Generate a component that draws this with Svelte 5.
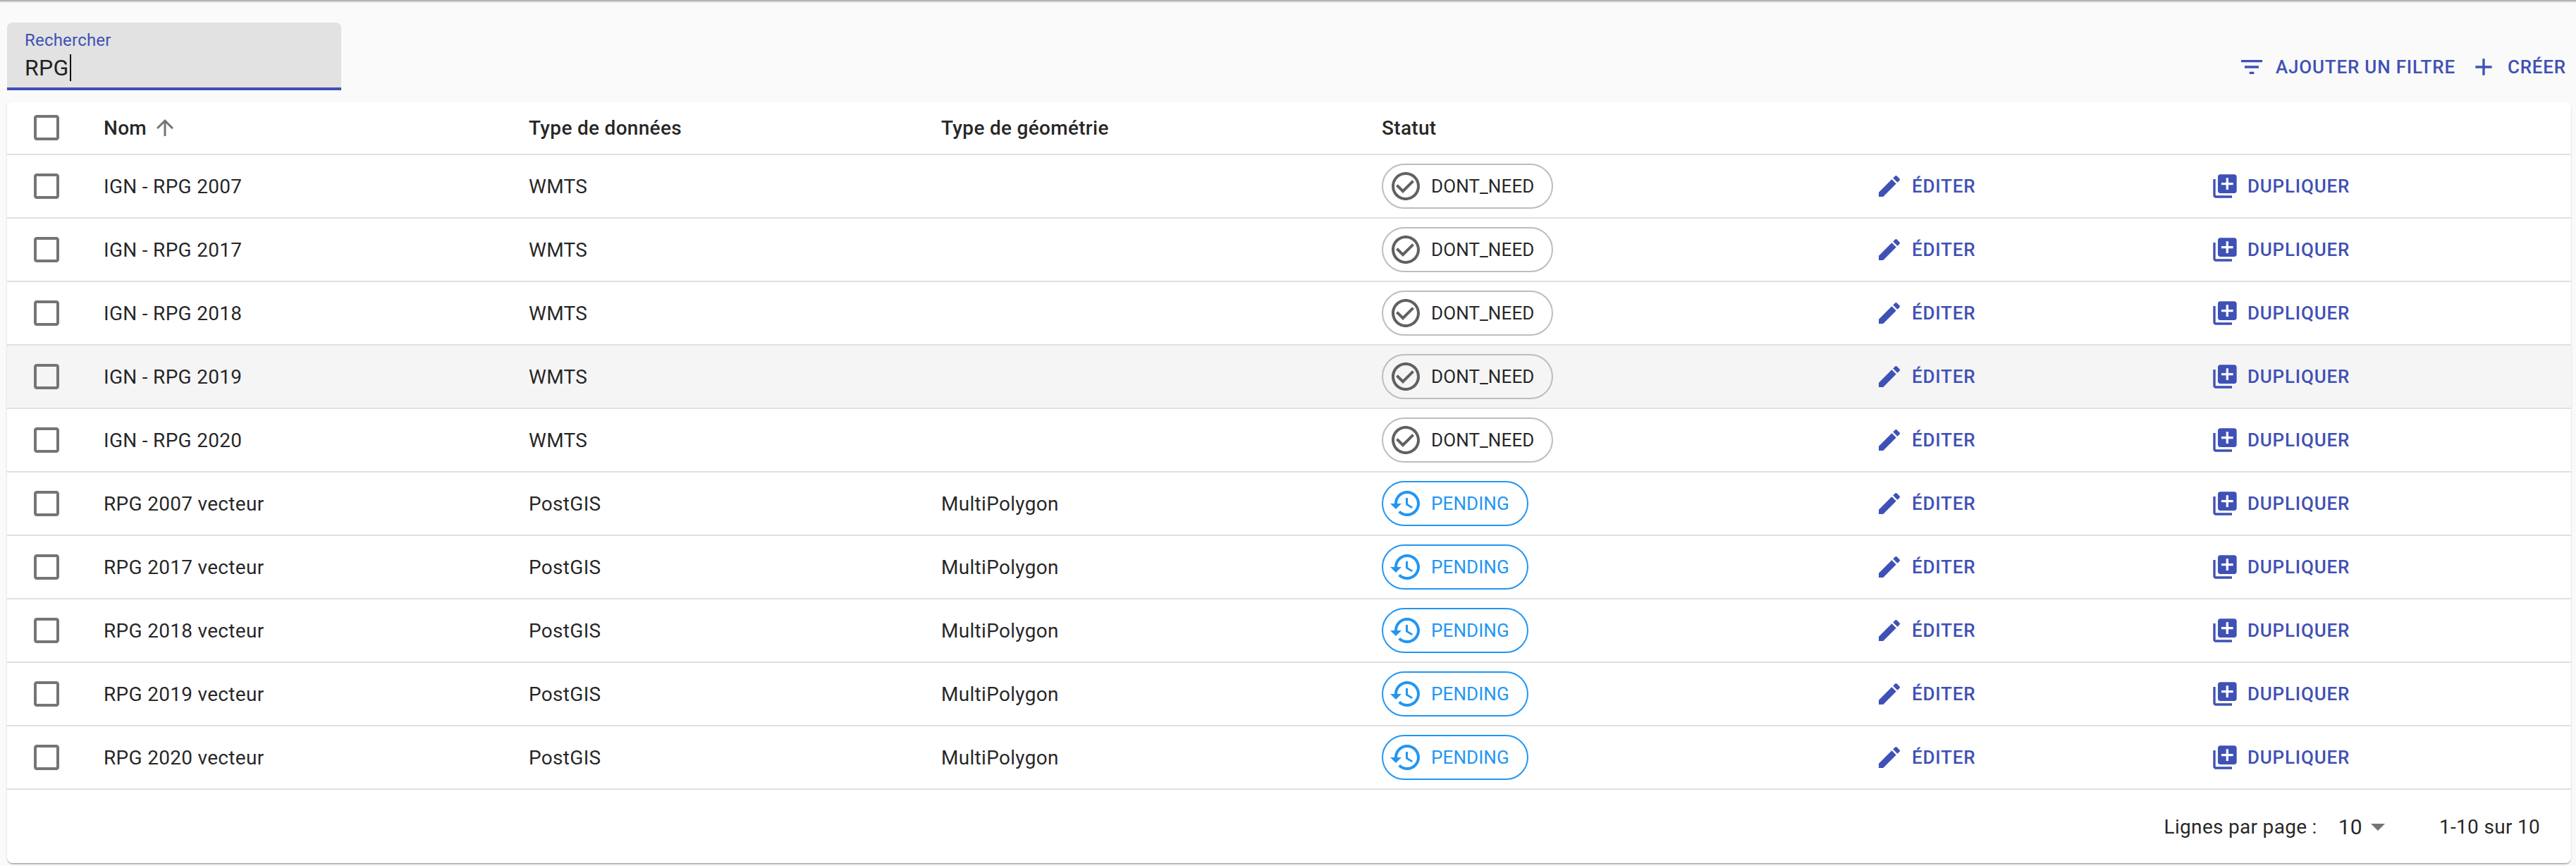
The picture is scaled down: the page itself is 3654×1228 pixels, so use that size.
<script>
	const icons = {
		edit: "M3 17.25V21h3.75L17.81 9.94l-3.75-3.75L3 17.25zM20.71 7.04c.39-.39.39-1.02 0-1.41l-2.34-2.34a.9959.9959 0 0 0-1.41 0l-1.83 1.83 3.75 3.75 1.83-1.83z",
		copy: "M4 6H2v14c0 1.1.9 2 2 2h14v-2H4V6zm16-4H8c-1.1 0-2 .9-2 2v12c0 1.1.9 2 2 2h12c1.1 0 2-.9 2-2V4c0-1.1-.9-2-2-2zm-1 9h-4v4h-2v-4H9V9h4V5h2v4h4v2z",
		pending: "M13 3c-4.97 0-9 4.03-9 9H1l3.89 3.89.07.14L9 12H6c0-3.87 3.13-7 7-7s7 3.13 7 7-3.13 7-7 7c-1.93 0-3.68-.79-4.94-2.06l-1.42 1.42C8.27 19.99 10.51 21 13 21c4.97 0 9-4.03 9-9s-4.03-9-9-9zm-1 5v5l4.28 2.54.72-1.21-3.5-2.08V8H12z",
		check: "M16.59 7.58L10 14.17l-3.59-3.58L5 12l5 5 8-8zM12 2C6.48 2 2 6.48 2 12s4.48 10 10 10 10-4.48 10-10S17.52 2 12 2zm0 18c-4.42 0-8-3.58-8-8s3.58-8 8-8 8 3.58 8 8-3.58 8-8 8z",
		filter: "M10 18h4v-2h-4v2zM3 6v2h18V6H3zm3 7h12v-2H6v2z",
		add: "M19 13h-6v6h-2v-6H5v-2h6V5h2v6h6v2z",
		up: "M4 12l1.41 1.41L11 7.83V20h2V7.83l5.58 5.59L20 12l-8-8-8 8z",
		box: "M19 5v14H5V5h14m0-2H5c-1.1 0-2 .9-2 2v14c0 1.1.9 2 2 2h14c1.1 0 2-.9 2-2V5c0-1.1-.9-2-2-2z",
		drop: "M7 10l5 5 5-5z"
	};

	const wmts = (name) => ({ name, type: "WMTS", geom: "", status: "DONT_NEED" });
	const postgis = (name) => ({ name, type: "PostGIS", geom: "MultiPolygon", status: "PENDING" });

	const rows = [
		wmts("IGN - RPG 2007"),
		wmts("IGN - RPG 2017"),
		wmts("IGN - RPG 2018"),
		wmts("IGN - RPG 2019"),
		wmts("IGN - RPG 2020"),
		postgis("RPG 2007 vecteur"),
		postgis("RPG 2017 vecteur"),
		postgis("RPG 2018 vecteur"),
		postgis("RPG 2019 vecteur"),
		postgis("RPG 2020 vecteur")
	];
</script>

{#snippet icon(d, cls)}
	<svg class={cls} viewBox="0 0 24 24" fill="currentColor"><path {d} /></svg>
{/snippet}

<div class="page">
	<div class="appbar-edge"></div>

	<div class="toolbar">
		<div class="search">
			<span class="search-label">Rechercher</span>
			<span class="search-value">RPG<span class="caret"></span></span>
		</div>
		<div class="actions">
			<button class="btn filter">{@render icon(icons.filter, "ic-filter")}Ajouter un filtre</button>
			<button class="btn create">{@render icon(icons.add, "ic-add")}Créer</button>
		</div>
	</div>

	<div class="card">
		<table>
			<colgroup>
				<col class="c-check" />
				<col class="c-name" />
				<col class="c-type" />
				<col class="c-geom" />
				<col class="c-status" />
				<col class="c-edit" />
				<col />
			</colgroup>
			<thead>
				<tr>
					<th class="check">{@render icon(icons.box, "ic-box")}</th>
					<th><span class="sort">Nom{@render icon(icons.up, "ic-up")}</span></th>
					<th>Type de données</th>
					<th>Type de géométrie</th>
					<th>Statut</th>
					<th></th>
					<th></th>
				</tr>
			</thead>
			<tbody>
				{#each rows as row, i}
					<tr class:hover={i === 3}>
						<td class="check">{@render icon(icons.box, "ic-box")}</td>
						<td>{row.name}</td>
						<td>{row.type}</td>
						<td>{row.geom}</td>
						<td>
							{#if row.status === "PENDING"}
								<span class="chip pending">{@render icon(icons.pending, "ic-chip")}{row.status}</span>
							{:else}
								<span class="chip">{@render icon(icons.check, "ic-chip")}{row.status}</span>
							{/if}
						</td>
						<td><span class="btn">{@render icon(icons.edit, "ic-row")}Éditer</span></td>
						<td><span class="btn">{@render icon(icons.copy, "ic-row")}Dupliquer</span></td>
					</tr>
				{/each}
			</tbody>
		</table>
		<div class="pagination">
			<span>Lignes par page :</span>
			<span class="per-page">10{@render icon(icons.drop, "ic-drop")}</span>
			<span class="range">1-10 sur 10</span>
		</div>
	</div>
</div>

<style>
	:global(body) {
		margin: 0;
		background: #fafafa;
	}
	.page {
		height: 1228px;
		overflow: hidden;
		font-family: Roboto, "Liberation Sans", sans-serif;
		color: rgba(0, 0, 0, 0.87);
		padding: 0 7px 0 10px;
		box-sizing: border-box;
	}
	.appbar-edge {
		height: 2px;
		margin: 0 -7px 0 -10px;
		background: #b4b4b4;
		box-shadow: 0 1px 2px rgba(0, 0, 0, 0.15);
	}
	.toolbar {
		display: flex;
		justify-content: space-between;
		align-items: center;
		padding-top: 30px;
		height: 96px;
	}
	.search {
		width: 474px;
		height: 96px;
		box-sizing: border-box;
		padding: 9px 25px 0;
		background: #e2e2e2;
		border-radius: 8px 8px 0 0;
		border-bottom: 4px solid #3f51b5;
		display: flex;
		flex-direction: column;
	}
	.search-label {
		font-size: 24px;
		line-height: 32px;
		letter-spacing: 0.2px;
		color: #3f51b5;
	}
	.search-value {
		font-size: 32px;
		line-height: 38px;
		margin-top: 4px;
		letter-spacing: 0.3px;
		display: flex;
		align-items: center;
	}
	.caret {
		width: 2px;
		height: 38px;
		background: #111;
		margin-left: 1px;
	}
	.actions {
		display: flex;
		align-items: center;
		padding-top: 30px;
		padding-right: 7px;
		gap: 20px;
	}
	.btn {
		display: inline-flex;
		align-items: center;
		font: 500 26px Roboto, sans-serif;
		letter-spacing: 0.8px;
		text-transform: uppercase;
		color: #3f51b5;
		background: none;
		border: 0;
		padding: 0;
		vertical-align: middle;
	}
	.ic-filter {
		width: 40px;
		height: 40px;
		margin-right: 14px;
	}
	.ic-add {
		width: 40px;
		height: 40px;
		margin-right: 14px;
	}
	.card {
		margin-top: 16px;
		height: 1080px;
		background: #fff;
		border-radius: 8px;
		box-shadow: 0 2px 2px -1px rgba(0, 0, 0, 0.4), 0 1px 3px rgba(0, 0, 0, 0.12);
	}
	table {
		width: 100%;
		table-layout: fixed;
		border-collapse: collapse;
	}
	.c-check {
		width: 137px;
	}
	.c-name {
		width: 603px;
	}
	.c-type {
		width: 585px;
	}
	.c-geom {
		width: 625px;
	}
	.c-status {
		width: 700px;
	}
	.c-edit {
		width: 476px;
	}
	th,
	td {
		padding: 0;
		text-align: left;
		font-size: 28px;
		letter-spacing: 0.3px;
		border-bottom: 2px solid #e0e0e0;
		box-sizing: border-box;
	}
	th {
		height: 75px;
		font-weight: 500;
	}
	td {
		height: 90px;
	}
	tr.hover td {
		background: #f5f5f5;
	}
	.check {
		padding-left: 32px;
		vertical-align: middle;
		line-height: 0;
	}
	.ic-box {
		width: 48px;
		height: 48px;
		color: #757575;
	}
	.sort {
		display: inline-flex;
		align-items: center;
	}
	.ic-up {
		width: 36px;
		height: 36px;
		margin-left: 8px;
		color: #757575;
	}
	.chip {
		display: inline-flex;
		align-items: center;
		box-sizing: border-box;
		height: 64px;
		padding: 0 25px 0 8px;
		border: 2px solid #bdbdbd;
		border-radius: 32px;
		font-size: 26px;
		letter-spacing: 0.1px;
		vertical-align: middle;
	}
	.chip.pending {
		border-color: #2196f3;
		color: #2196f3;
	}
	.ic-chip {
		width: 48px;
		height: 48px;
		margin-right: 12px;
		color: #616161;
	}
	.pending .ic-chip {
		color: #2196f3;
	}
	.ic-row {
		width: 40px;
		height: 40px;
		margin-right: 12px;
	}
	.pagination {
		display: flex;
		align-items: center;
		justify-content: flex-end;
		height: 104px;
		padding-right: 44px;
		font-size: 28px;
		letter-spacing: 0.3px;
	}
	.per-page {
		display: inline-flex;
		align-items: center;
		margin-left: 30px;
		font-size: 30px;
	}
	.ic-drop {
		width: 48px;
		height: 48px;
		color: #757575;
		margin-left: -2px;
	}
	.range {
		margin-left: 63px;
	}
</style>
